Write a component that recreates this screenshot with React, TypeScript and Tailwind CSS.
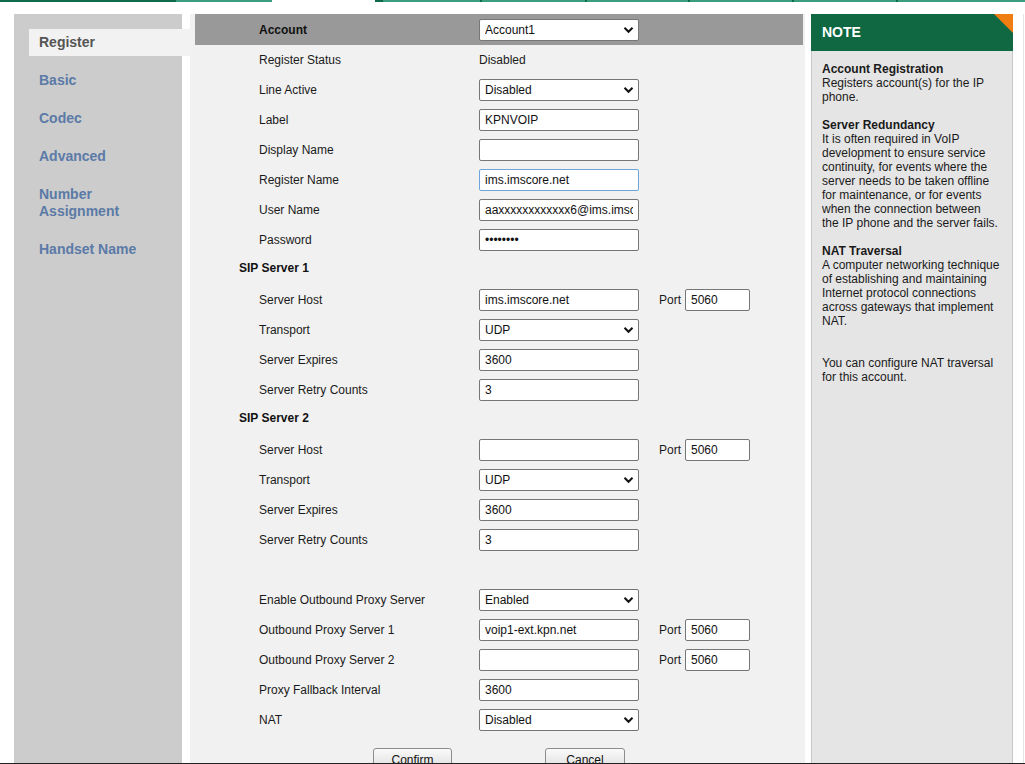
import React from "react";

type Row =
  | { kind: "head"; label: string }
  | { kind: "text"; label: string; value: string }
  | { kind: "input"; label: string; value: string; focus?: boolean; password?: boolean; port?: string }
  | { kind: "select"; label: string; value: string }
  | { kind: "blank" };

const rows: Row[] = [
  { kind: "text", label: "Register Status", value: "Disabled" },
  { kind: "select", label: "Line Active", value: "Disabled" },
  { kind: "input", label: "Label", value: "KPNVOIP" },
  { kind: "input", label: "Display Name", value: "" },
  { kind: "input", label: "Register Name", value: "ims.imscore.net", focus: true },
  { kind: "input", label: "User Name", value: "aaxxxxxxxxxxxx6@ims.imscore.net" },
  { kind: "input", label: "Password", value: "12345678", password: true },
  { kind: "head", label: "SIP Server 1" },
  { kind: "input", label: "Server Host", value: "ims.imscore.net", port: "5060" },
  { kind: "select", label: "Transport", value: "UDP" },
  { kind: "input", label: "Server Expires", value: "3600" },
  { kind: "input", label: "Server Retry Counts", value: "3" },
  { kind: "head", label: "SIP Server 2" },
  { kind: "input", label: "Server Host", value: "", port: "5060" },
  { kind: "select", label: "Transport", value: "UDP" },
  { kind: "input", label: "Server Expires", value: "3600" },
  { kind: "input", label: "Server Retry Counts", value: "3" },
  { kind: "blank" },
  { kind: "select", label: "Enable Outbound Proxy Server", value: "Enabled" },
  { kind: "input", label: "Outbound Proxy Server 1", value: "voip1-ext.kpn.net", port: "5060" },
  { kind: "input", label: "Outbound Proxy Server 2", value: "", port: "5060" },
  { kind: "input", label: "Proxy Fallback Interval", value: "3600" },
  { kind: "select", label: "NAT", value: "Disabled" },
];

const navItems = ["Basic", "Codec", "Advanced", "Number Assignment", "Handset Name"];

// note text, broken the way the device page wraps it
const notes: { title?: string; lines: string[]; gap: string }[] = [
  { title: "Account Registration", lines: ["Registers account(s) for the IP", "phone."], gap: "mt-0" },
  {
    title: "Server Redundancy",
    lines: [
      "It is often required in VoIP",
      "development to ensure service",
      "continuity, for events where the",
      "server needs to be taken offline",
      "for maintenance, or for events",
      "when the connection between",
      "the IP phone and the server fails.",
    ],
    gap: "mt-[14px]",
  },
  {
    title: "NAT Traversal",
    lines: [
      "A computer networking technique",
      "of establishing and maintaining",
      "Internet protocol connections",
      "across gateways that implement",
      "NAT.",
    ],
    gap: "mt-[14px]",
  },
  { lines: ["You can configure NAT traversal", "for this account."], gap: "mt-[28px]" },
];

function Chevron() {
  return (
    <svg width="11" height="8" viewBox="0 0 11 8" className="pointer-events-none absolute right-[5px] top-[7px]">
      <path d="M1.5 1.8 L5.5 5.8 L9.5 1.8" fill="none" stroke="#111" strokeWidth="2" />
    </svg>
  );
}

function Select({ value }: { value: string }) {
  return (
    <div className="relative w-[160px]">
      <select
        defaultValue={value}
        className="h-[22px] w-[160px] appearance-none rounded-[2px] border border-[#767676] bg-white pl-[5px] text-[12px] text-[#111] outline-none"
      >
        <option>{value}</option>
      </select>
      <Chevron />
    </div>
  );
}

function Input({ value, focus, password, w = "w-[160px]" }: { value: string; focus?: boolean; password?: boolean; w?: string }) {
  return (
    <input
      type={password ? "password" : "text"}
      defaultValue={value}
      className={`h-[22px] ${w} rounded-[2px] border bg-white px-[5px] text-[12px] text-[#111] outline-none ${
        focus ? "border-[#6fa5dc]" : "border-[#767676]"
      }`}
    />
  );
}

export default function App() {
  return (
    <div
      className="flex h-[764px] w-[1025px] flex-col overflow-hidden bg-white text-[12px] text-[#1a1a1a]"
      style={{ fontFamily: '"Liberation Sans", Arial, sans-serif' }}
    >
      {/* top tab borders */}
      <div className="flex h-[2px] w-full shrink-0">
        <div className="w-[176px] bg-[#0f6a4a]" />
        <div className="w-[96px] bg-[#3b9d80]" />
        <div className="w-[103px] bg-white" />
        <div className="w-[8px] bg-[#0f6a4a]" />
        <div className="w-[97px] bg-[#3b9d80]" />
        <div className="w-[2px] bg-[#0f6a4a]" />
        <div className="w-[103px] bg-[#3b9d80]" />
        <div className="w-[2px] bg-[#0f6a4a]" />
        <div className="w-[101px] bg-[#3b9d80]" />
        <div className="w-[2px] bg-[#0f6a4a]" />
        <div className="w-[102px] bg-[#3b9d80]" />
        <div className="w-[2px] bg-[#0f6a4a]" />
        <div className="w-[102px] bg-[#3b9d80]" />
        <div className="w-[2px] bg-[#0f6a4a]" />
        <div className="flex-1 bg-[#3b9d80]" />
      </div>

      <div className="flex min-h-0 flex-1 pt-[12px]">
        {/* sidebar */}
        <div className="ml-[14px] flex w-[168px] shrink-0 flex-col gap-[11px] bg-[#cccccc] pt-[15px]">
          <div className="relative z-10 ml-[15px] mr-[-11px] bg-[#f2f2f2] py-[5px] pl-[10px] text-[14px] font-bold leading-[17px] text-[#555555]">
            Register
          </div>
          {navItems.map((n) => (
            <div
              key={n}
              className="ml-[15px] w-[120px] py-[5px] pl-[10px] text-[14px] font-bold leading-[17px] text-[#5b7aa7]"
            >
              {n}
            </div>
          ))}
        </div>

        {/* main form */}
        <div className="ml-[8px] flex w-[615px] shrink-0 flex-col overflow-hidden bg-[#f1f1f1]">
          <div className="ml-[5px] mr-[2px] flex h-[31px] shrink-0 items-center bg-[#999999]">
            <div className="w-[284px] pl-[64px] font-bold text-[#111]">Account</div>
            <Select value="Account1" />
          </div>

          {rows.map((r, i) => {
            if (r.kind === "blank") return <div key={i} className="h-[30px] shrink-0" />;
            if (r.kind === "head")
              return (
                <div key={i} className="flex h-[30px] shrink-0 items-center pb-[4px] pl-[49px] font-bold text-[#111]">
                  {r.label}
                </div>
              );
            return (
              <div key={i} className="flex h-[30px] shrink-0 items-center">
                <div className="w-[289px] pl-[69px]">{r.label}</div>
                {r.kind === "text" && <div>{r.value}</div>}
                {r.kind === "select" && <Select value={r.value} />}
                {r.kind === "input" && <Input value={r.value} focus={r.focus} password={r.password} />}
                {r.kind === "input" && r.port !== undefined && (
                  <div className="ml-[20px] flex items-center gap-[4px]">
                    <span>Port</span>
                    <Input value={r.port} w="w-[65px]" />
                  </div>
                )}
              </div>
            );
          })}

          <div className="mt-[13px] flex shrink-0 pl-[183px]">
            <button className="h-[24px] w-[79px] rounded-[3px] border border-[#8c8c8c] bg-gradient-to-b from-[#fafafa] to-[#dcdcdc] text-[12px] text-[#111]">
              Confirm
            </button>
            <button className="ml-[93px] h-[24px] w-[80px] rounded-[3px] border border-[#8c8c8c] bg-gradient-to-b from-[#fafafa] to-[#dcdcdc] text-[12px] text-[#111]">
              Cancel
            </button>
          </div>
        </div>

        {/* note panel */}
        <div className="ml-[6px] flex w-[202px] shrink-0 flex-col">
          <div className="relative flex h-[37px] items-center bg-[#0f6842] pl-[11px] text-[14px] font-bold text-white">
            NOTE
            <svg width="19" height="19" viewBox="0 0 19 19" className="absolute right-0 top-0">
              <polygon points="0,0 19,0 19,19" fill="#f07d12" />
            </svg>
          </div>
          <div className="flex-1 border-x border-[#c8c8c8] bg-[#e5e5e5] pl-[10px] pt-[11px] leading-[14px] text-[#1a1a1a]">
            {notes.map((n, i) => (
              <div key={i} className={n.gap}>
                {n.title && <div className="font-bold">{n.title}</div>}
                {n.lines.map((l) => (
                  <div key={l} className="whitespace-nowrap">
                    {l}
                  </div>
                ))}
              </div>
            ))}
          </div>
        </div>
        <div className="ml-[10px] w-px bg-[#e4e4e4]" />
      </div>
      <div className="h-px w-full shrink-0 bg-[#222222]" />
    </div>
  );
}
